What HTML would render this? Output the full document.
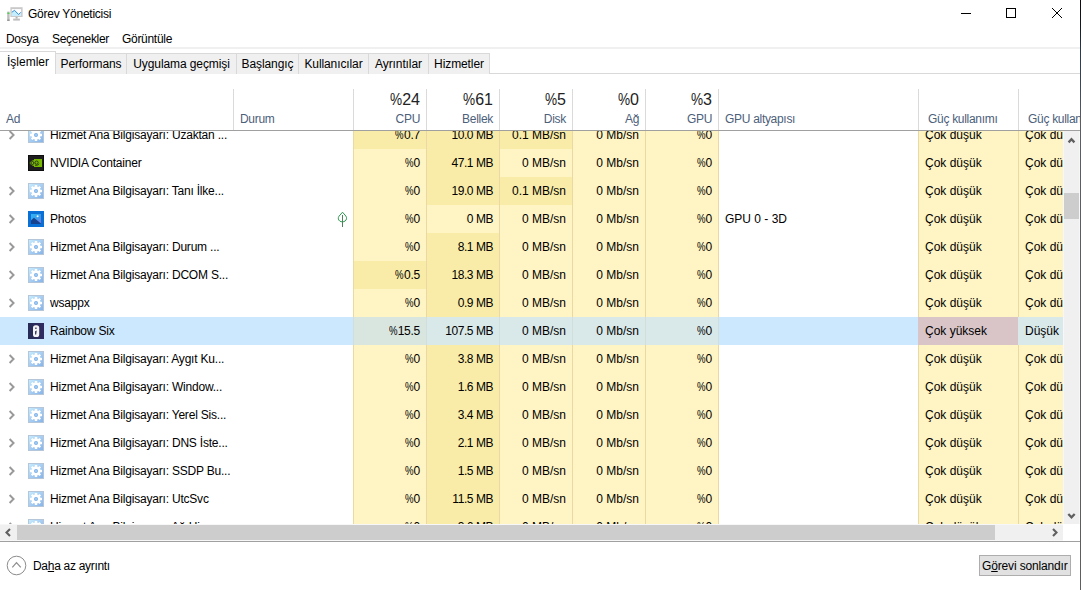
<!DOCTYPE html>
<html><head><meta charset="utf-8"><title>Görev Yöneticisi</title>
<style>
*{margin:0;padding:0;box-sizing:border-box}
html,body{width:1081px;height:590px;overflow:hidden;background:#fff}
body{position:relative;font-family:"Liberation Sans",sans-serif;font-size:12px;color:#000}
.a{position:absolute;white-space:nowrap}
.ic{position:absolute}
.tab{position:absolute;top:53px;height:21px;background:#F0F0F0;border:1px solid #D9D9D9;border-bottom:none;line-height:21px;text-align:center;letter-spacing:-0.1px;color:#000}
.hs{position:absolute;top:89px;width:1px;height:41px;background:#DADADA}
.ht{position:absolute;top:111px;line-height:16px;color:#4C607A;white-space:nowrap;letter-spacing:-0.3px}
.hp{position:absolute;top:91px;line-height:18px;font-size:16px;color:#222;white-space:nowrap}
.row{position:absolute;left:0;width:1119px;height:28px}
.c{position:absolute;top:0;height:28px;line-height:28px;white-space:nowrap}
.r{text-align:right;padding-right:6px}
.cs{position:absolute;top:0;width:1px;height:28px;background:#EBD9A4}
</style></head><body>
<svg class="ic" style="left:4px;top:4px" width="22" height="20" viewBox="0 0 22 20">
<rect x="6.4" y="3.2" width="12.2" height="9.8" fill="#C9C9C9"/>
<rect x="7.8" y="5.1" width="9.3" height="6.8" fill="#fff"/>
<path d="M7.8 8.3 10.5 6.3 14.6 10.5 16.8 8.3V11.9H7.8z" fill="#C6EDFD"/>
<path d="M7.8 8.3 10.5 6.3 14.6 10.5 16.8 8.3" fill="none" stroke="#1E80CF" stroke-width="0.9"/>
<rect x="11.6" y="13" width="2" height="1.6" fill="#B4B4B4"/>
<rect x="9.2" y="14.6" width="6.7" height="2" fill="#BEBEBE"/>
<rect x="3.2" y="7.6" width="2.4" height="9.2" fill="#BDBDBD"/>
<rect x="3.2" y="15.6" width="2.4" height="1.2" fill="#8A8A8A"/>
<rect x="3.4" y="8.6" width="2" height="1.3" fill="#3AD83A"/>
</svg>
<div class="a" style="left:28px;top:6px;line-height:16px;letter-spacing:-0.25px">Görev Yöneticisi</div>
<div class="a" style="left:961px;top:13px;width:10px;height:1px;background:#000"></div>
<div class="a" style="left:1006px;top:8px;width:10px;height:10px;border:1px solid #000"></div>
<svg class="ic" style="left:1051px;top:7px" width="12" height="12" viewBox="0 0 12 12"><path d="M1 1 11 11M11 1 1 11" stroke="#000" stroke-width="1"/></svg>
<div class="a" style="left:1080px;top:0;width:1px;height:590px;background:linear-gradient(#0E0A0E 0px,#14181C 25px,#2C3944 50px,#3A4550 80px,#5A5D62 120px,#5E5E5E 590px)"></div>
<div class="a" style="left:6px;top:31px;line-height:16px;letter-spacing:-0.3px">Dosya</div>
<div class="a" style="left:52px;top:31px;line-height:16px;letter-spacing:-0.3px">Seçenekler</div>
<div class="a" style="left:122px;top:31px;line-height:16px;letter-spacing:-0.3px">Görüntüle</div>
<div class="a" style="left:0;top:47px;width:1080px;height:2px;background:#F0F0F0"></div>
<div class="a" style="left:0;top:73px;width:1080px;height:1px;background:#D9D9D9"></div><div class="tab" style="left:55px;width:72px">Performans</div><div class="tab" style="left:126px;width:111px">Uygulama geçmişi</div><div class="tab" style="left:236px;width:63px">Başlangıç</div><div class="tab" style="left:298px;width:71px">Kullanıcılar</div><div class="tab" style="left:368px;width:61px">Ayrıntılar</div><div class="tab" style="left:428px;width:62px">Hizmetler</div><div class="a" style="left:-1px;top:51px;width:57px;height:23px;background:#fff;border:1px solid #D9D9D9;border-bottom:none"></div><div class="a" style="left:7px;top:54px;line-height:16px">İşlemler</div><div class="hs" style="left:233px"></div><div class="hs" style="left:353px"></div><div class="hs" style="left:426px"></div><div class="hs" style="left:499px"></div><div class="hs" style="left:572px"></div><div class="hs" style="left:645px"></div><div class="hs" style="left:718px"></div><div class="hs" style="left:918px"></div><div class="hs" style="left:1018px"></div><div class="a" style="left:0;top:130px;width:1080px;height:1px;background:#A0A0A0"></div><div class="ht" style="left:6px">Ad</div><div class="ht" style="left:240px">Durum</div><div class="ht" style="left:354px;width:66px;text-align:right">CPU</div><div class="hp" style="left:354px;width:66px;text-align:right"><span style="display:inline-block;width:12px;transform:scaleX(0.85);transform-origin:0 50%">%</span>24</div><div class="ht" style="left:427px;width:66px;text-align:right">Bellek</div><div class="hp" style="left:427px;width:66px;text-align:right"><span style="display:inline-block;width:12px;transform:scaleX(0.85);transform-origin:0 50%">%</span>61</div><div class="ht" style="left:500px;width:66px;text-align:right">Disk</div><div class="hp" style="left:500px;width:66px;text-align:right"><span style="display:inline-block;width:12px;transform:scaleX(0.85);transform-origin:0 50%">%</span>5</div><div class="ht" style="left:573px;width:66px;text-align:right">Ağ</div><div class="hp" style="left:573px;width:66px;text-align:right"><span style="display:inline-block;width:12px;transform:scaleX(0.85);transform-origin:0 50%">%</span>0</div><div class="ht" style="left:646px;width:66px;text-align:right">GPU</div><div class="hp" style="left:646px;width:66px;text-align:right"><span style="display:inline-block;width:12px;transform:scaleX(0.85);transform-origin:0 50%">%</span>3</div><div class="ht" style="left:725px">GPU altyapısı</div><div class="ht" style="left:928px">Güç kullanımı</div><div class="ht" style="left:1028px;width:52px;overflow:hidden">Güç kullanımı eğilimi</div><div class="a" style="left:0;top:131px;width:1063px;height:393px;overflow:hidden"><div class="row" style="top:-10px"><svg width="8" height="10" viewBox="0 0 8 10" style="position:absolute;left:8px;top:9px"><path d="M1.6 1 5.6 5 1.6 9" fill="none" stroke="#999" stroke-width="1.9"/></svg><svg class="ic" style="left:28px;top:6px" width="16" height="16" viewBox="0 0 16 16"><defs><linearGradient id="gg0" x1="0" y1="0" x2="1" y2="1"><stop offset="0" stop-color="#C9EEFF"/><stop offset="0.5" stop-color="#A6CDF3"/><stop offset="1" stop-color="#86B2EA"/></linearGradient></defs><rect x="0.5" y="0.5" width="15" height="15" fill="url(#gg0)" stroke="#B5C6D8"/><g fill="#fff"><circle cx="8" cy="8" r="4.6"/><rect x="6.8" y="2" width="2.4" height="12"/><rect x="2" y="6.8" width="12" height="2.4"/><rect x="6.8" y="2" width="2.4" height="12" transform="rotate(45 8 8)"/><rect x="6.8" y="2" width="2.4" height="12" transform="rotate(-45 8 8)"/></g><circle cx="8" cy="8" r="2" fill="#7FB0E6"/><circle cx="8" cy="8" r="1" fill="#A9D0F5"/></svg><div class="c" style="left:50px;letter-spacing:-0.2px">Hizmet Ana Bilgisayarı: Uzaktan ...</div><div class="c r" style="left:354px;width:72px;background:#F9ECA8;letter-spacing:-0.25px"><span style="display:inline-block;width:8.6px;transform:scaleX(0.8);transform-origin:0 50%">%</span>0.7</div><div class="c r" style="left:427px;width:72px;background:#F9ECA8;letter-spacing:-0.45px">10.0 MB</div><div class="c r" style="left:500px;width:72px;background:#F9ECA8">0.1 MB/sn</div><div class="c r" style="left:573px;width:72px;background:#FFF4C4">0 Mb/sn</div><div class="c r" style="left:646px;width:72px;background:#FFF4C4;letter-spacing:-0.25px"><span style="display:inline-block;width:8.6px;transform:scaleX(0.8);transform-origin:0 50%">%</span>0</div><div class="c" style="left:919px;width:99px;padding-left:6px;background:#FFF4C4">Çok düşük</div><div class="c" style="left:1019px;width:100px;padding-left:6px;background:#FFF4C4">Çok düşük</div><div class="cs" style="left:353px"></div><div class="cs" style="left:426px"></div><div class="cs" style="left:499px"></div><div class="cs" style="left:572px"></div><div class="cs" style="left:645px"></div><div class="cs" style="left:718px"></div><div class="cs" style="left:918px"></div><div class="cs" style="left:1018px"></div></div><div class="row" style="top:18px"><svg class="ic" style="left:28px;top:6px" width="16" height="16" viewBox="0 0 16 16"><rect width="16" height="16" fill="#0E0E0E"/><rect x="1" y="1" width="14" height="14" fill="#1E1E1E"/><path d="M6 4h8v8H6z" fill="#76B900"/><path d="M1.6 8C2.8 6.2 4.6 5.2 6.6 5.1L9 5.3C10.6 5.7 11.6 6.8 12 8C11.4 9.3 10 10.4 8.3 10.8L6 11C4.2 10.8 2.7 9.7 1.6 8z" fill="#76B900"/><circle cx="4.4" cy="8" r="1.5" fill="none" stroke="#1E1E1E" stroke-width=".8"/><circle cx="8.6" cy="7.6" r="1.6" fill="none" stroke="#1E1E1E" stroke-width=".8"/><path d="M7 10.2c1.6.4 3.2-.1 4.2-1.3" fill="none" stroke="#1E1E1E" stroke-width=".8"/></svg><div class="c" style="left:50px;letter-spacing:-0.2px">NVIDIA Container</div><div class="c r" style="left:354px;width:72px;background:#FFF4C4;letter-spacing:-0.25px"><span style="display:inline-block;width:8.6px;transform:scaleX(0.8);transform-origin:0 50%">%</span>0</div><div class="c r" style="left:427px;width:72px;background:#F9ECA8;letter-spacing:-0.45px">47.1 MB</div><div class="c r" style="left:500px;width:72px;background:#FFF4C4">0 MB/sn</div><div class="c r" style="left:573px;width:72px;background:#FFF4C4">0 Mb/sn</div><div class="c r" style="left:646px;width:72px;background:#FFF4C4;letter-spacing:-0.25px"><span style="display:inline-block;width:8.6px;transform:scaleX(0.8);transform-origin:0 50%">%</span>0</div><div class="c" style="left:919px;width:99px;padding-left:6px;background:#FFF4C4">Çok düşük</div><div class="c" style="left:1019px;width:100px;padding-left:6px;background:#FFF4C4">Çok düşük</div><div class="cs" style="left:353px"></div><div class="cs" style="left:426px"></div><div class="cs" style="left:499px"></div><div class="cs" style="left:572px"></div><div class="cs" style="left:645px"></div><div class="cs" style="left:718px"></div><div class="cs" style="left:918px"></div><div class="cs" style="left:1018px"></div></div><div class="row" style="top:46px"><svg width="8" height="10" viewBox="0 0 8 10" style="position:absolute;left:8px;top:9px"><path d="M1.6 1 5.6 5 1.6 9" fill="none" stroke="#999" stroke-width="1.9"/></svg><svg class="ic" style="left:28px;top:6px" width="16" height="16" viewBox="0 0 16 16"><defs><linearGradient id="gg2" x1="0" y1="0" x2="1" y2="1"><stop offset="0" stop-color="#C9EEFF"/><stop offset="0.5" stop-color="#A6CDF3"/><stop offset="1" stop-color="#86B2EA"/></linearGradient></defs><rect x="0.5" y="0.5" width="15" height="15" fill="url(#gg2)" stroke="#B5C6D8"/><g fill="#fff"><circle cx="8" cy="8" r="4.6"/><rect x="6.8" y="2" width="2.4" height="12"/><rect x="2" y="6.8" width="12" height="2.4"/><rect x="6.8" y="2" width="2.4" height="12" transform="rotate(45 8 8)"/><rect x="6.8" y="2" width="2.4" height="12" transform="rotate(-45 8 8)"/></g><circle cx="8" cy="8" r="2" fill="#7FB0E6"/><circle cx="8" cy="8" r="1" fill="#A9D0F5"/></svg><div class="c" style="left:50px;letter-spacing:-0.2px">Hizmet Ana Bilgisayarı: Tanı İlke...</div><div class="c r" style="left:354px;width:72px;background:#FFF4C4;letter-spacing:-0.25px"><span style="display:inline-block;width:8.6px;transform:scaleX(0.8);transform-origin:0 50%">%</span>0</div><div class="c r" style="left:427px;width:72px;background:#F9ECA8;letter-spacing:-0.45px">19.0 MB</div><div class="c r" style="left:500px;width:72px;background:#F9ECA8">0.1 MB/sn</div><div class="c r" style="left:573px;width:72px;background:#FFF4C4">0 Mb/sn</div><div class="c r" style="left:646px;width:72px;background:#FFF4C4;letter-spacing:-0.25px"><span style="display:inline-block;width:8.6px;transform:scaleX(0.8);transform-origin:0 50%">%</span>0</div><div class="c" style="left:919px;width:99px;padding-left:6px;background:#FFF4C4">Çok düşük</div><div class="c" style="left:1019px;width:100px;padding-left:6px;background:#FFF4C4">Çok düşük</div><div class="cs" style="left:353px"></div><div class="cs" style="left:426px"></div><div class="cs" style="left:499px"></div><div class="cs" style="left:572px"></div><div class="cs" style="left:645px"></div><div class="cs" style="left:718px"></div><div class="cs" style="left:918px"></div><div class="cs" style="left:1018px"></div></div><div class="row" style="top:74px"><svg width="8" height="10" viewBox="0 0 8 10" style="position:absolute;left:8px;top:9px"><path d="M1.6 1 5.6 5 1.6 9" fill="none" stroke="#999" stroke-width="1.9"/></svg><svg class="ic" style="left:28px;top:6px" width="16" height="16" viewBox="0 0 16 16"><defs><linearGradient id="pg" x1="0" y1="0" x2="1" y2="1"><stop offset="0" stop-color="#2DB6F4"/><stop offset="0.55" stop-color="#3E9CEB"/><stop offset="1" stop-color="#8A6FE0"/></linearGradient></defs><rect width="16" height="16" fill="#0A70D6"/><rect x="3" y="3" width="10" height="10" fill="url(#pg)"/><path d="M3 9.4 5.9 6.8 13 12.4V13H3z" fill="#17438E"/><circle cx="9.6" cy="5.2" r="1" fill="#F2F8FF"/></svg><div class="c" style="left:50px;letter-spacing:-0.2px">Photos</div><svg width="12" height="18" viewBox="0 0 12 18" style="position:absolute;left:337px;top:6px"><path d="M5.5 1.2 2 5.2C.8 6.8 1.2 9 2.8 10.1c1.6 1 3.8 1 5.3-.1 1.6-1.1 1.9-3.3.8-4.9z" fill="none" stroke="#2A9A4E" stroke-width="1"/><path d="M5.5 4v12" stroke="#4F7F5C" stroke-width="1"/></svg><div class="c r" style="left:354px;width:72px;background:#FFF4C4;letter-spacing:-0.25px"><span style="display:inline-block;width:8.6px;transform:scaleX(0.8);transform-origin:0 50%">%</span>0</div><div class="c r" style="left:427px;width:72px;background:#FFF4C4;letter-spacing:-0.45px">0 MB</div><div class="c r" style="left:500px;width:72px;background:#FFF4C4">0 MB/sn</div><div class="c r" style="left:573px;width:72px;background:#FFF4C4">0 Mb/sn</div><div class="c r" style="left:646px;width:72px;background:#FFF4C4;letter-spacing:-0.25px"><span style="display:inline-block;width:8.6px;transform:scaleX(0.8);transform-origin:0 50%">%</span>0</div><div class="c" style="left:725px">GPU 0 - 3D</div><div class="c" style="left:919px;width:99px;padding-left:6px;background:#FFF4C4">Çok düşük</div><div class="c" style="left:1019px;width:100px;padding-left:6px;background:#FFF4C4">Çok düşük</div><div class="cs" style="left:353px"></div><div class="cs" style="left:426px"></div><div class="cs" style="left:499px"></div><div class="cs" style="left:572px"></div><div class="cs" style="left:645px"></div><div class="cs" style="left:718px"></div><div class="cs" style="left:918px"></div><div class="cs" style="left:1018px"></div></div><div class="row" style="top:102px"><svg width="8" height="10" viewBox="0 0 8 10" style="position:absolute;left:8px;top:9px"><path d="M1.6 1 5.6 5 1.6 9" fill="none" stroke="#999" stroke-width="1.9"/></svg><svg class="ic" style="left:28px;top:6px" width="16" height="16" viewBox="0 0 16 16"><defs><linearGradient id="gg4" x1="0" y1="0" x2="1" y2="1"><stop offset="0" stop-color="#C9EEFF"/><stop offset="0.5" stop-color="#A6CDF3"/><stop offset="1" stop-color="#86B2EA"/></linearGradient></defs><rect x="0.5" y="0.5" width="15" height="15" fill="url(#gg4)" stroke="#B5C6D8"/><g fill="#fff"><circle cx="8" cy="8" r="4.6"/><rect x="6.8" y="2" width="2.4" height="12"/><rect x="2" y="6.8" width="12" height="2.4"/><rect x="6.8" y="2" width="2.4" height="12" transform="rotate(45 8 8)"/><rect x="6.8" y="2" width="2.4" height="12" transform="rotate(-45 8 8)"/></g><circle cx="8" cy="8" r="2" fill="#7FB0E6"/><circle cx="8" cy="8" r="1" fill="#A9D0F5"/></svg><div class="c" style="left:50px;letter-spacing:-0.2px">Hizmet Ana Bilgisayarı: Durum ...</div><div class="c r" style="left:354px;width:72px;background:#FFF4C4;letter-spacing:-0.25px"><span style="display:inline-block;width:8.6px;transform:scaleX(0.8);transform-origin:0 50%">%</span>0</div><div class="c r" style="left:427px;width:72px;background:#F9ECA8;letter-spacing:-0.45px">8.1 MB</div><div class="c r" style="left:500px;width:72px;background:#FFF4C4">0 MB/sn</div><div class="c r" style="left:573px;width:72px;background:#FFF4C4">0 Mb/sn</div><div class="c r" style="left:646px;width:72px;background:#FFF4C4;letter-spacing:-0.25px"><span style="display:inline-block;width:8.6px;transform:scaleX(0.8);transform-origin:0 50%">%</span>0</div><div class="c" style="left:919px;width:99px;padding-left:6px;background:#FFF4C4">Çok düşük</div><div class="c" style="left:1019px;width:100px;padding-left:6px;background:#FFF4C4">Çok düşük</div><div class="cs" style="left:353px"></div><div class="cs" style="left:426px"></div><div class="cs" style="left:499px"></div><div class="cs" style="left:572px"></div><div class="cs" style="left:645px"></div><div class="cs" style="left:718px"></div><div class="cs" style="left:918px"></div><div class="cs" style="left:1018px"></div></div><div class="row" style="top:130px"><svg width="8" height="10" viewBox="0 0 8 10" style="position:absolute;left:8px;top:9px"><path d="M1.6 1 5.6 5 1.6 9" fill="none" stroke="#999" stroke-width="1.9"/></svg><svg class="ic" style="left:28px;top:6px" width="16" height="16" viewBox="0 0 16 16"><defs><linearGradient id="gg5" x1="0" y1="0" x2="1" y2="1"><stop offset="0" stop-color="#C9EEFF"/><stop offset="0.5" stop-color="#A6CDF3"/><stop offset="1" stop-color="#86B2EA"/></linearGradient></defs><rect x="0.5" y="0.5" width="15" height="15" fill="url(#gg5)" stroke="#B5C6D8"/><g fill="#fff"><circle cx="8" cy="8" r="4.6"/><rect x="6.8" y="2" width="2.4" height="12"/><rect x="2" y="6.8" width="12" height="2.4"/><rect x="6.8" y="2" width="2.4" height="12" transform="rotate(45 8 8)"/><rect x="6.8" y="2" width="2.4" height="12" transform="rotate(-45 8 8)"/></g><circle cx="8" cy="8" r="2" fill="#7FB0E6"/><circle cx="8" cy="8" r="1" fill="#A9D0F5"/></svg><div class="c" style="left:50px;letter-spacing:-0.2px">Hizmet Ana Bilgisayarı: DCOM S...</div><div class="c r" style="left:354px;width:72px;background:#F9ECA8;letter-spacing:-0.25px"><span style="display:inline-block;width:8.6px;transform:scaleX(0.8);transform-origin:0 50%">%</span>0.5</div><div class="c r" style="left:427px;width:72px;background:#F9ECA8;letter-spacing:-0.45px">18.3 MB</div><div class="c r" style="left:500px;width:72px;background:#FFF4C4">0 MB/sn</div><div class="c r" style="left:573px;width:72px;background:#FFF4C4">0 Mb/sn</div><div class="c r" style="left:646px;width:72px;background:#FFF4C4;letter-spacing:-0.25px"><span style="display:inline-block;width:8.6px;transform:scaleX(0.8);transform-origin:0 50%">%</span>0</div><div class="c" style="left:919px;width:99px;padding-left:6px;background:#FFF4C4">Çok düşük</div><div class="c" style="left:1019px;width:100px;padding-left:6px;background:#FFF4C4">Çok düşük</div><div class="cs" style="left:353px"></div><div class="cs" style="left:426px"></div><div class="cs" style="left:499px"></div><div class="cs" style="left:572px"></div><div class="cs" style="left:645px"></div><div class="cs" style="left:718px"></div><div class="cs" style="left:918px"></div><div class="cs" style="left:1018px"></div></div><div class="row" style="top:158px"><svg width="8" height="10" viewBox="0 0 8 10" style="position:absolute;left:8px;top:9px"><path d="M1.6 1 5.6 5 1.6 9" fill="none" stroke="#999" stroke-width="1.9"/></svg><svg class="ic" style="left:28px;top:6px" width="16" height="16" viewBox="0 0 16 16"><defs><linearGradient id="gg6" x1="0" y1="0" x2="1" y2="1"><stop offset="0" stop-color="#C9EEFF"/><stop offset="0.5" stop-color="#A6CDF3"/><stop offset="1" stop-color="#86B2EA"/></linearGradient></defs><rect x="0.5" y="0.5" width="15" height="15" fill="url(#gg6)" stroke="#B5C6D8"/><g fill="#fff"><circle cx="8" cy="8" r="4.6"/><rect x="6.8" y="2" width="2.4" height="12"/><rect x="2" y="6.8" width="12" height="2.4"/><rect x="6.8" y="2" width="2.4" height="12" transform="rotate(45 8 8)"/><rect x="6.8" y="2" width="2.4" height="12" transform="rotate(-45 8 8)"/></g><circle cx="8" cy="8" r="2" fill="#7FB0E6"/><circle cx="8" cy="8" r="1" fill="#A9D0F5"/></svg><div class="c" style="left:50px;letter-spacing:-0.2px">wsappx</div><div class="c r" style="left:354px;width:72px;background:#FFF4C4;letter-spacing:-0.25px"><span style="display:inline-block;width:8.6px;transform:scaleX(0.8);transform-origin:0 50%">%</span>0</div><div class="c r" style="left:427px;width:72px;background:#F9ECA8;letter-spacing:-0.45px">0.9 MB</div><div class="c r" style="left:500px;width:72px;background:#FFF4C4">0 MB/sn</div><div class="c r" style="left:573px;width:72px;background:#FFF4C4">0 Mb/sn</div><div class="c r" style="left:646px;width:72px;background:#FFF4C4;letter-spacing:-0.25px"><span style="display:inline-block;width:8.6px;transform:scaleX(0.8);transform-origin:0 50%">%</span>0</div><div class="c" style="left:919px;width:99px;padding-left:6px;background:#FFF4C4">Çok düşük</div><div class="c" style="left:1019px;width:100px;padding-left:6px;background:#FFF4C4">Çok düşük</div><div class="cs" style="left:353px"></div><div class="cs" style="left:426px"></div><div class="cs" style="left:499px"></div><div class="cs" style="left:572px"></div><div class="cs" style="left:645px"></div><div class="cs" style="left:718px"></div><div class="cs" style="left:918px"></div><div class="cs" style="left:1018px"></div></div><div class="row" style="top:186px;background:#CCE8FF"><svg class="ic" style="left:28px;top:6px" width="16" height="16" viewBox="0 0 16 16"><defs><linearGradient id="r6g" x1="0" y1="0" x2="1" y2="0"><stop offset="0" stop-color="#262B55"/><stop offset="1" stop-color="#302C62"/></linearGradient></defs><rect width="16" height="16" fill="url(#r6g)"/><rect x="5" y="2.2" width="6.2" height="11.8" rx="2.6" fill="#F4F4F4"/><path d="M7.2 4.4h1.4v1.6H7.2z" fill="#3A3F66"/><path d="M7 8.2 8.8 7.6 8.2 11.6H7z" fill="#3A3F66"/></svg><div class="c" style="left:50px;letter-spacing:-0.2px">Rainbow Six</div><div class="c r" style="left:354px;width:72px;background:#D9E5DF;letter-spacing:-0.25px"><span style="display:inline-block;width:8.6px;transform:scaleX(0.8);transform-origin:0 50%">%</span>15.5</div><div class="c r" style="left:427px;width:72px;background:#D9E8E8;letter-spacing:-0.45px">107.5 MB</div><div class="c r" style="left:500px;width:72px;background:#D9E8E8">0 MB/sn</div><div class="c r" style="left:573px;width:72px;background:#D9E8E8">0 Mb/sn</div><div class="c r" style="left:646px;width:72px;background:#D9E8E8;letter-spacing:-0.25px"><span style="display:inline-block;width:8.6px;transform:scaleX(0.8);transform-origin:0 50%">%</span>0</div><div class="c" style="left:919px;width:99px;padding-left:6px;background:#D9C5C7">Çok yüksek</div><div class="c" style="left:1019px;width:100px;padding-left:6px;background:#D9E8E8">Düşük</div><div class="cs" style="left:353px;background:#D2DEDA"></div><div class="cs" style="left:426px;background:#D2DEDA"></div><div class="cs" style="left:499px;background:#D2DEDA"></div><div class="cs" style="left:572px;background:#D2DEDA"></div><div class="cs" style="left:645px;background:#D2DEDA"></div><div class="cs" style="left:718px;background:#D2DEDA"></div><div class="cs" style="left:918px;background:#D9C5C7"></div><div class="cs" style="left:1018px;background:#D9E8E8"></div></div><div class="row" style="top:214px"><svg width="8" height="10" viewBox="0 0 8 10" style="position:absolute;left:8px;top:9px"><path d="M1.6 1 5.6 5 1.6 9" fill="none" stroke="#999" stroke-width="1.9"/></svg><svg class="ic" style="left:28px;top:6px" width="16" height="16" viewBox="0 0 16 16"><defs><linearGradient id="gg8" x1="0" y1="0" x2="1" y2="1"><stop offset="0" stop-color="#C9EEFF"/><stop offset="0.5" stop-color="#A6CDF3"/><stop offset="1" stop-color="#86B2EA"/></linearGradient></defs><rect x="0.5" y="0.5" width="15" height="15" fill="url(#gg8)" stroke="#B5C6D8"/><g fill="#fff"><circle cx="8" cy="8" r="4.6"/><rect x="6.8" y="2" width="2.4" height="12"/><rect x="2" y="6.8" width="12" height="2.4"/><rect x="6.8" y="2" width="2.4" height="12" transform="rotate(45 8 8)"/><rect x="6.8" y="2" width="2.4" height="12" transform="rotate(-45 8 8)"/></g><circle cx="8" cy="8" r="2" fill="#7FB0E6"/><circle cx="8" cy="8" r="1" fill="#A9D0F5"/></svg><div class="c" style="left:50px;letter-spacing:-0.2px">Hizmet Ana Bilgisayarı: Aygıt Ku...</div><div class="c r" style="left:354px;width:72px;background:#FFF4C4;letter-spacing:-0.25px"><span style="display:inline-block;width:8.6px;transform:scaleX(0.8);transform-origin:0 50%">%</span>0</div><div class="c r" style="left:427px;width:72px;background:#F9ECA8;letter-spacing:-0.45px">3.8 MB</div><div class="c r" style="left:500px;width:72px;background:#FFF4C4">0 MB/sn</div><div class="c r" style="left:573px;width:72px;background:#FFF4C4">0 Mb/sn</div><div class="c r" style="left:646px;width:72px;background:#FFF4C4;letter-spacing:-0.25px"><span style="display:inline-block;width:8.6px;transform:scaleX(0.8);transform-origin:0 50%">%</span>0</div><div class="c" style="left:919px;width:99px;padding-left:6px;background:#FFF4C4">Çok düşük</div><div class="c" style="left:1019px;width:100px;padding-left:6px;background:#FFF4C4">Çok düşük</div><div class="cs" style="left:353px"></div><div class="cs" style="left:426px"></div><div class="cs" style="left:499px"></div><div class="cs" style="left:572px"></div><div class="cs" style="left:645px"></div><div class="cs" style="left:718px"></div><div class="cs" style="left:918px"></div><div class="cs" style="left:1018px"></div></div><div class="row" style="top:242px"><svg width="8" height="10" viewBox="0 0 8 10" style="position:absolute;left:8px;top:9px"><path d="M1.6 1 5.6 5 1.6 9" fill="none" stroke="#999" stroke-width="1.9"/></svg><svg class="ic" style="left:28px;top:6px" width="16" height="16" viewBox="0 0 16 16"><defs><linearGradient id="gg9" x1="0" y1="0" x2="1" y2="1"><stop offset="0" stop-color="#C9EEFF"/><stop offset="0.5" stop-color="#A6CDF3"/><stop offset="1" stop-color="#86B2EA"/></linearGradient></defs><rect x="0.5" y="0.5" width="15" height="15" fill="url(#gg9)" stroke="#B5C6D8"/><g fill="#fff"><circle cx="8" cy="8" r="4.6"/><rect x="6.8" y="2" width="2.4" height="12"/><rect x="2" y="6.8" width="12" height="2.4"/><rect x="6.8" y="2" width="2.4" height="12" transform="rotate(45 8 8)"/><rect x="6.8" y="2" width="2.4" height="12" transform="rotate(-45 8 8)"/></g><circle cx="8" cy="8" r="2" fill="#7FB0E6"/><circle cx="8" cy="8" r="1" fill="#A9D0F5"/></svg><div class="c" style="left:50px;letter-spacing:-0.2px">Hizmet Ana Bilgisayarı: Window...</div><div class="c r" style="left:354px;width:72px;background:#FFF4C4;letter-spacing:-0.25px"><span style="display:inline-block;width:8.6px;transform:scaleX(0.8);transform-origin:0 50%">%</span>0</div><div class="c r" style="left:427px;width:72px;background:#F9ECA8;letter-spacing:-0.45px">1.6 MB</div><div class="c r" style="left:500px;width:72px;background:#FFF4C4">0 MB/sn</div><div class="c r" style="left:573px;width:72px;background:#FFF4C4">0 Mb/sn</div><div class="c r" style="left:646px;width:72px;background:#FFF4C4;letter-spacing:-0.25px"><span style="display:inline-block;width:8.6px;transform:scaleX(0.8);transform-origin:0 50%">%</span>0</div><div class="c" style="left:919px;width:99px;padding-left:6px;background:#FFF4C4">Çok düşük</div><div class="c" style="left:1019px;width:100px;padding-left:6px;background:#FFF4C4">Çok düşük</div><div class="cs" style="left:353px"></div><div class="cs" style="left:426px"></div><div class="cs" style="left:499px"></div><div class="cs" style="left:572px"></div><div class="cs" style="left:645px"></div><div class="cs" style="left:718px"></div><div class="cs" style="left:918px"></div><div class="cs" style="left:1018px"></div></div><div class="row" style="top:270px"><svg width="8" height="10" viewBox="0 0 8 10" style="position:absolute;left:8px;top:9px"><path d="M1.6 1 5.6 5 1.6 9" fill="none" stroke="#999" stroke-width="1.9"/></svg><svg class="ic" style="left:28px;top:6px" width="16" height="16" viewBox="0 0 16 16"><defs><linearGradient id="gg10" x1="0" y1="0" x2="1" y2="1"><stop offset="0" stop-color="#C9EEFF"/><stop offset="0.5" stop-color="#A6CDF3"/><stop offset="1" stop-color="#86B2EA"/></linearGradient></defs><rect x="0.5" y="0.5" width="15" height="15" fill="url(#gg10)" stroke="#B5C6D8"/><g fill="#fff"><circle cx="8" cy="8" r="4.6"/><rect x="6.8" y="2" width="2.4" height="12"/><rect x="2" y="6.8" width="12" height="2.4"/><rect x="6.8" y="2" width="2.4" height="12" transform="rotate(45 8 8)"/><rect x="6.8" y="2" width="2.4" height="12" transform="rotate(-45 8 8)"/></g><circle cx="8" cy="8" r="2" fill="#7FB0E6"/><circle cx="8" cy="8" r="1" fill="#A9D0F5"/></svg><div class="c" style="left:50px;letter-spacing:-0.2px">Hizmet Ana Bilgisayarı: Yerel Sis...</div><div class="c r" style="left:354px;width:72px;background:#FFF4C4;letter-spacing:-0.25px"><span style="display:inline-block;width:8.6px;transform:scaleX(0.8);transform-origin:0 50%">%</span>0</div><div class="c r" style="left:427px;width:72px;background:#F9ECA8;letter-spacing:-0.45px">3.4 MB</div><div class="c r" style="left:500px;width:72px;background:#FFF4C4">0 MB/sn</div><div class="c r" style="left:573px;width:72px;background:#FFF4C4">0 Mb/sn</div><div class="c r" style="left:646px;width:72px;background:#FFF4C4;letter-spacing:-0.25px"><span style="display:inline-block;width:8.6px;transform:scaleX(0.8);transform-origin:0 50%">%</span>0</div><div class="c" style="left:919px;width:99px;padding-left:6px;background:#FFF4C4">Çok düşük</div><div class="c" style="left:1019px;width:100px;padding-left:6px;background:#FFF4C4">Çok düşük</div><div class="cs" style="left:353px"></div><div class="cs" style="left:426px"></div><div class="cs" style="left:499px"></div><div class="cs" style="left:572px"></div><div class="cs" style="left:645px"></div><div class="cs" style="left:718px"></div><div class="cs" style="left:918px"></div><div class="cs" style="left:1018px"></div></div><div class="row" style="top:298px"><svg width="8" height="10" viewBox="0 0 8 10" style="position:absolute;left:8px;top:9px"><path d="M1.6 1 5.6 5 1.6 9" fill="none" stroke="#999" stroke-width="1.9"/></svg><svg class="ic" style="left:28px;top:6px" width="16" height="16" viewBox="0 0 16 16"><defs><linearGradient id="gg11" x1="0" y1="0" x2="1" y2="1"><stop offset="0" stop-color="#C9EEFF"/><stop offset="0.5" stop-color="#A6CDF3"/><stop offset="1" stop-color="#86B2EA"/></linearGradient></defs><rect x="0.5" y="0.5" width="15" height="15" fill="url(#gg11)" stroke="#B5C6D8"/><g fill="#fff"><circle cx="8" cy="8" r="4.6"/><rect x="6.8" y="2" width="2.4" height="12"/><rect x="2" y="6.8" width="12" height="2.4"/><rect x="6.8" y="2" width="2.4" height="12" transform="rotate(45 8 8)"/><rect x="6.8" y="2" width="2.4" height="12" transform="rotate(-45 8 8)"/></g><circle cx="8" cy="8" r="2" fill="#7FB0E6"/><circle cx="8" cy="8" r="1" fill="#A9D0F5"/></svg><div class="c" style="left:50px;letter-spacing:-0.2px">Hizmet Ana Bilgisayarı: DNS İste...</div><div class="c r" style="left:354px;width:72px;background:#FFF4C4;letter-spacing:-0.25px"><span style="display:inline-block;width:8.6px;transform:scaleX(0.8);transform-origin:0 50%">%</span>0</div><div class="c r" style="left:427px;width:72px;background:#F9ECA8;letter-spacing:-0.45px">2.1 MB</div><div class="c r" style="left:500px;width:72px;background:#FFF4C4">0 MB/sn</div><div class="c r" style="left:573px;width:72px;background:#FFF4C4">0 Mb/sn</div><div class="c r" style="left:646px;width:72px;background:#FFF4C4;letter-spacing:-0.25px"><span style="display:inline-block;width:8.6px;transform:scaleX(0.8);transform-origin:0 50%">%</span>0</div><div class="c" style="left:919px;width:99px;padding-left:6px;background:#FFF4C4">Çok düşük</div><div class="c" style="left:1019px;width:100px;padding-left:6px;background:#FFF4C4">Çok düşük</div><div class="cs" style="left:353px"></div><div class="cs" style="left:426px"></div><div class="cs" style="left:499px"></div><div class="cs" style="left:572px"></div><div class="cs" style="left:645px"></div><div class="cs" style="left:718px"></div><div class="cs" style="left:918px"></div><div class="cs" style="left:1018px"></div></div><div class="row" style="top:326px"><svg width="8" height="10" viewBox="0 0 8 10" style="position:absolute;left:8px;top:9px"><path d="M1.6 1 5.6 5 1.6 9" fill="none" stroke="#999" stroke-width="1.9"/></svg><svg class="ic" style="left:28px;top:6px" width="16" height="16" viewBox="0 0 16 16"><defs><linearGradient id="gg12" x1="0" y1="0" x2="1" y2="1"><stop offset="0" stop-color="#C9EEFF"/><stop offset="0.5" stop-color="#A6CDF3"/><stop offset="1" stop-color="#86B2EA"/></linearGradient></defs><rect x="0.5" y="0.5" width="15" height="15" fill="url(#gg12)" stroke="#B5C6D8"/><g fill="#fff"><circle cx="8" cy="8" r="4.6"/><rect x="6.8" y="2" width="2.4" height="12"/><rect x="2" y="6.8" width="12" height="2.4"/><rect x="6.8" y="2" width="2.4" height="12" transform="rotate(45 8 8)"/><rect x="6.8" y="2" width="2.4" height="12" transform="rotate(-45 8 8)"/></g><circle cx="8" cy="8" r="2" fill="#7FB0E6"/><circle cx="8" cy="8" r="1" fill="#A9D0F5"/></svg><div class="c" style="left:50px;letter-spacing:-0.2px">Hizmet Ana Bilgisayarı: SSDP Bu...</div><div class="c r" style="left:354px;width:72px;background:#FFF4C4;letter-spacing:-0.25px"><span style="display:inline-block;width:8.6px;transform:scaleX(0.8);transform-origin:0 50%">%</span>0</div><div class="c r" style="left:427px;width:72px;background:#F9ECA8;letter-spacing:-0.45px">1.5 MB</div><div class="c r" style="left:500px;width:72px;background:#FFF4C4">0 MB/sn</div><div class="c r" style="left:573px;width:72px;background:#FFF4C4">0 Mb/sn</div><div class="c r" style="left:646px;width:72px;background:#FFF4C4;letter-spacing:-0.25px"><span style="display:inline-block;width:8.6px;transform:scaleX(0.8);transform-origin:0 50%">%</span>0</div><div class="c" style="left:919px;width:99px;padding-left:6px;background:#FFF4C4">Çok düşük</div><div class="c" style="left:1019px;width:100px;padding-left:6px;background:#FFF4C4">Çok düşük</div><div class="cs" style="left:353px"></div><div class="cs" style="left:426px"></div><div class="cs" style="left:499px"></div><div class="cs" style="left:572px"></div><div class="cs" style="left:645px"></div><div class="cs" style="left:718px"></div><div class="cs" style="left:918px"></div><div class="cs" style="left:1018px"></div></div><div class="row" style="top:354px"><svg width="8" height="10" viewBox="0 0 8 10" style="position:absolute;left:8px;top:9px"><path d="M1.6 1 5.6 5 1.6 9" fill="none" stroke="#999" stroke-width="1.9"/></svg><svg class="ic" style="left:28px;top:6px" width="16" height="16" viewBox="0 0 16 16"><defs><linearGradient id="gg13" x1="0" y1="0" x2="1" y2="1"><stop offset="0" stop-color="#C9EEFF"/><stop offset="0.5" stop-color="#A6CDF3"/><stop offset="1" stop-color="#86B2EA"/></linearGradient></defs><rect x="0.5" y="0.5" width="15" height="15" fill="url(#gg13)" stroke="#B5C6D8"/><g fill="#fff"><circle cx="8" cy="8" r="4.6"/><rect x="6.8" y="2" width="2.4" height="12"/><rect x="2" y="6.8" width="12" height="2.4"/><rect x="6.8" y="2" width="2.4" height="12" transform="rotate(45 8 8)"/><rect x="6.8" y="2" width="2.4" height="12" transform="rotate(-45 8 8)"/></g><circle cx="8" cy="8" r="2" fill="#7FB0E6"/><circle cx="8" cy="8" r="1" fill="#A9D0F5"/></svg><div class="c" style="left:50px;letter-spacing:-0.2px">Hizmet Ana Bilgisayarı: UtcSvc</div><div class="c r" style="left:354px;width:72px;background:#FFF4C4;letter-spacing:-0.25px"><span style="display:inline-block;width:8.6px;transform:scaleX(0.8);transform-origin:0 50%">%</span>0</div><div class="c r" style="left:427px;width:72px;background:#F9ECA8;letter-spacing:-0.45px">11.5 MB</div><div class="c r" style="left:500px;width:72px;background:#FFF4C4">0 MB/sn</div><div class="c r" style="left:573px;width:72px;background:#FFF4C4">0 Mb/sn</div><div class="c r" style="left:646px;width:72px;background:#FFF4C4;letter-spacing:-0.25px"><span style="display:inline-block;width:8.6px;transform:scaleX(0.8);transform-origin:0 50%">%</span>0</div><div class="c" style="left:919px;width:99px;padding-left:6px;background:#FFF4C4">Çok düşük</div><div class="c" style="left:1019px;width:100px;padding-left:6px;background:#FFF4C4">Çok düşük</div><div class="cs" style="left:353px"></div><div class="cs" style="left:426px"></div><div class="cs" style="left:499px"></div><div class="cs" style="left:572px"></div><div class="cs" style="left:645px"></div><div class="cs" style="left:718px"></div><div class="cs" style="left:918px"></div><div class="cs" style="left:1018px"></div></div><div class="row" style="top:382px"><svg width="8" height="10" viewBox="0 0 8 10" style="position:absolute;left:8px;top:9px"><path d="M1.6 1 5.6 5 1.6 9" fill="none" stroke="#999" stroke-width="1.9"/></svg><svg class="ic" style="left:28px;top:6px" width="16" height="16" viewBox="0 0 16 16"><defs><linearGradient id="gg14" x1="0" y1="0" x2="1" y2="1"><stop offset="0" stop-color="#C9EEFF"/><stop offset="0.5" stop-color="#A6CDF3"/><stop offset="1" stop-color="#86B2EA"/></linearGradient></defs><rect x="0.5" y="0.5" width="15" height="15" fill="url(#gg14)" stroke="#B5C6D8"/><g fill="#fff"><circle cx="8" cy="8" r="4.6"/><rect x="6.8" y="2" width="2.4" height="12"/><rect x="2" y="6.8" width="12" height="2.4"/><rect x="6.8" y="2" width="2.4" height="12" transform="rotate(45 8 8)"/><rect x="6.8" y="2" width="2.4" height="12" transform="rotate(-45 8 8)"/></g><circle cx="8" cy="8" r="2" fill="#7FB0E6"/><circle cx="8" cy="8" r="1" fill="#A9D0F5"/></svg><div class="c" style="left:50px;letter-spacing:-0.2px">Hizmet Ana Bilgisayarı: Ağ Hi...</div><div class="c r" style="left:354px;width:72px;background:#FFF4C4;letter-spacing:-0.25px"><span style="display:inline-block;width:8.6px;transform:scaleX(0.8);transform-origin:0 50%">%</span>0</div><div class="c r" style="left:427px;width:72px;background:#F9ECA8;letter-spacing:-0.45px">3.6 MB</div><div class="c r" style="left:500px;width:72px;background:#FFF4C4">0 MB/sn</div><div class="c r" style="left:573px;width:72px;background:#FFF4C4">0 Mb/sn</div><div class="c r" style="left:646px;width:72px;background:#FFF4C4;letter-spacing:-0.25px"><span style="display:inline-block;width:8.6px;transform:scaleX(0.8);transform-origin:0 50%">%</span>0</div><div class="c" style="left:919px;width:99px;padding-left:6px;background:#FFF4C4">Çok düşük</div><div class="c" style="left:1019px;width:100px;padding-left:6px;background:#FFF4C4">Çok düşük</div><div class="cs" style="left:353px"></div><div class="cs" style="left:426px"></div><div class="cs" style="left:499px"></div><div class="cs" style="left:572px"></div><div class="cs" style="left:645px"></div><div class="cs" style="left:718px"></div><div class="cs" style="left:918px"></div><div class="cs" style="left:1018px"></div></div></div><div class="a" style="left:1063px;top:131px;width:17px;height:393px;background:#F0F0F0;border-left:1px solid #F7F7F7;border-right:1px solid #F7F7F7"></div>
<svg class="ic" style="left:1063px;top:134px" width="17" height="12" viewBox="0 0 17 12"><path d="M5.6 8.4 8.5 5.3 11.4 8.4" fill="none" stroke="#606060" stroke-width="2.3"/></svg>
<div class="a" style="left:1064px;top:193px;width:15px;height:26px;background:#CDCDCD"></div>
<svg class="ic" style="left:1063px;top:510px" width="17" height="12" viewBox="0 0 17 12"><path d="M5.3 4 8.5 7.3 11.7 4" fill="none" stroke="#606060" stroke-width="2.3"/></svg>
<div class="a" style="left:0;top:524px;width:1063px;height:17px;background:#F0F0F0;border-top:1px solid #F7F7F7;border-bottom:1px solid #F7F7F7"></div>
<div class="a" style="left:17px;top:525px;width:978px;height:15px;background:#CDCDCD"></div>
<svg class="ic" style="left:0;top:524px" width="17" height="17" viewBox="0 0 17 17"><path d="M10 5 6.5 8.5 10 12" fill="none" stroke="#606060" stroke-width="2.1"/></svg>
<svg class="ic" style="left:1046px;top:524px" width="17" height="17" viewBox="0 0 17 17"><path d="M7 5 10.5 8.5 7 12" fill="none" stroke="#606060" stroke-width="2.1"/></svg>
<div class="a" style="left:0;top:541px;width:1080px;height:1px;background:#A0A0A0"></div>
<svg class="ic" style="left:6px;top:555px" width="21" height="21" viewBox="0 0 21 21"><circle cx="10.5" cy="10.5" r="9.3" fill="none" stroke="#8C8C8C" stroke-width="1"/><path d="M6.3 12.4 10.5 7.6 14.8 12.4" fill="none" stroke="#8E8E8E" stroke-width="1.2"/></svg>
<div class="a" style="left:33px;top:558px;line-height:16px;letter-spacing:-0.3px">Da<span style="text-decoration:underline">h</span>a az ayrıntı</div>
<div class="a" style="left:979px;top:555px;width:92px;height:21px;background:#E1E1E1;border:1px solid #ADADAD"></div>
<div class="a" style="left:982px;top:558px;line-height:16px;letter-spacing:-0.15px">G<span style="text-decoration:underline">ö</span>revi sonlandır</div>
</body></html>
